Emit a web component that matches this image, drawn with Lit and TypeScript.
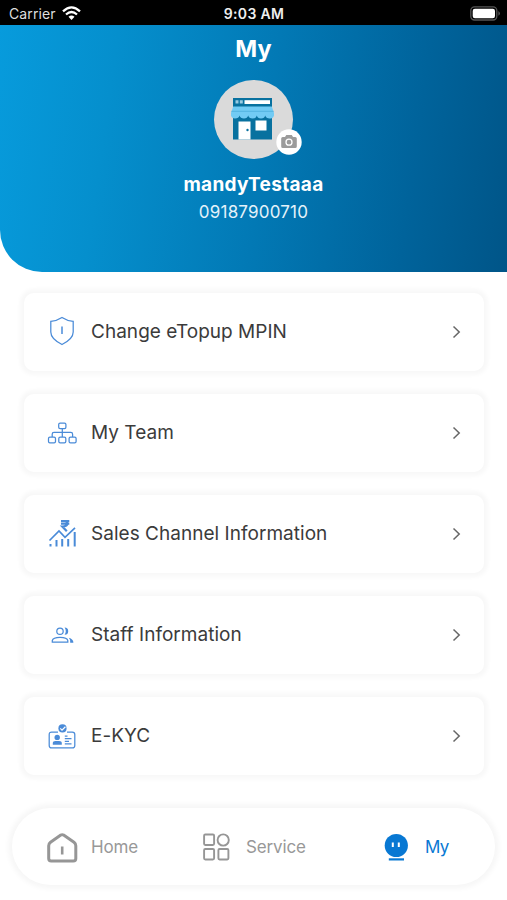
import { LitElement, html, css, svg } from "lit";
import { customElement, property } from "lit/decorators.js";

const icons: Record<string, unknown> = {
  shield: svg`<g transform="translate(0 -1)"><path d="M15 2.5C18.5 4.8 22 6 26.2 6.4V17C26.2 22.5 21 26.5 15 29.5C9 26.5 3.8 22.5 3.8 17V6.4C8 6 11.5 4.8 15 2.5Z"/><path d="M15 11.5V19" stroke-width="1.5"/></g>`,
  team: svg`<rect x="11.7" y="6" width="7.2" height="5.6" rx="1.4"/><path d="M15.3 11.6V20M5.2 20V17.2Q5.2 15.4 7 15.4H23.8Q25.6 15.4 25.6 17.2V20"/><rect x="1.5" y="20" width="7" height="5.8" rx="1.4"/><rect x="11.8" y="20" width="7" height="5.8" rx="1.4"/><rect x="22.1" y="20" width="7" height="5.8" rx="1.4"/>`,
  sales: svg`<path d="M2.5 22.5L12 13L18 19.3L28 9.8" stroke-width="1.7"/><path d="M3.5 26V28.6M9.5 22V28.6M15.2 21V28.6M21.2 21V28.6M27.7 14V28.6" stroke-width="2"/><path d="M14 3H22.3M14 5.6H22.3M15 3H17.5Q20.4 3 20.4 5.3Q20.4 8.5 15.3 8.5L19.8 13.3" stroke-width="2.2"/>`,
  staff: svg`<circle cx="13" cy="12.2" r="3.2"/><path d="M5.3 23.1V21.5Q6 18.3 13 18.3Q20.2 18.3 20.8 21.5V23.1Z"/><path d="M17.6 8.5Q21.2 8.5 21.2 12.2Q21.2 15.7 17.6 15.7Q20 12.2 17.6 8.5ZM21.8 18.8Q26.4 20.1 26.4 23.7H23.2Q23.8 21 21.8 18.8Z" fill="currentColor" stroke="none"/>`,
  kyc: svg`<g transform="translate(0 1.4)"><path d="M11 10.6H4.7Q2.2 10.6 2.2 13.1V24Q2.2 26.5 4.7 26.5H25.3Q27.8 26.5 27.8 24V13.1Q27.8 10.6 25.3 10.6H20"/><circle cx="15.5" cy="7" r="4.1" fill="currentColor" stroke="none"/><path d="M13.3 7L15 8.7L18.4 5.4" stroke="#fff" stroke-width="1.2"/><circle cx="10.2" cy="16" r="2.7" fill="currentColor" stroke="none"/><path d="M5.8 23.3V21.7Q5.8 19.5 8.5 19.5H12Q14.8 19.5 14.8 21.7V23.3Z" fill="currentColor" stroke="none"/><path d="M17.8 14.8H20.5M17.8 17.3H24.5M17.8 19.9H22M17.8 22.4H24.5" stroke-width="1.2"/></g>`,
};

@customElement("menu-card")
class MenuCard extends LitElement {
  @property() icon = "";
  @property() label = "";
  static styles = css`
    :host { display: flex; align-items: center; box-sizing: border-box; height: 78px; padding: 0 23px 0 23px; border-radius: 10px; background: #fff; box-shadow: 0 0 4px 4px #f8f8f8; }
    .icon { width: 30px; height: 32px; flex: none; color: #4a8bd8; fill: none; stroke: currentColor; stroke-width: 1.25; }
    .label { flex: 1; margin-left: 14px; font-size: 19px; line-height: 26px; letter-spacing: .03px; color: #3b3b3b; white-space: nowrap; }
    .chevron { width: 9px; height: 14px; fill: none; stroke: #666; stroke-width: 1.5; }
  `;
  render() {
    return html`<svg class="icon" viewBox="0 0 30 32">${icons[this.icon]}</svg>
      <span class="label">${this.label}</span>
      <svg class="chevron" viewBox="0 0 9 14"><path d="M1.5 1.5L7.2 7L1.5 12.5" /></svg>`;
  }
}

@customElement("app-root")
class AppRoot extends LitElement {
  static styles = css`
    :host { display: flex; flex-direction: column; width: 507px; height: 900px; overflow: hidden; background: #fff; font-family: Inter, "Liberation Sans", sans-serif; }
    svg { display: block; flex: none; }
    .status { display: grid; grid-template-columns: 1fr auto 1fr; align-items: center; box-sizing: border-box; height: 25px; flex: none; padding: 2px 6px 0 9px; background: #000; color: #fff; font-size: 14px; }
    .carrier { display: flex; align-items: center; gap: 6px; color: #dedede; letter-spacing: .1px; }
    .time { font-weight: 600; font-size: 14px; color: #eee; margin-left: -2px; letter-spacing: .32px; }
    .battery { justify-self: end; }
    .hero { display: flex; flex-direction: column; align-items: center; flex: none; height: 247px; border-bottom-left-radius: 42px; color: #fff; background: linear-gradient(98deg, #079bdc 0%, #058fcd 22%, #0279b5 52%, #00639b 80%, #005588 100%); }
    .title { margin-top: 9px; font-size: 23.5px; line-height: 30px; font-weight: 700; }
    .avatar { position: relative; width: 79px; height: 79px; margin-top: 16px; border-radius: 50%; background: #dadada; }
    .camera { position: absolute; left: 62px; top: 49px; }
    .shop { position: absolute; left: 16px; top: 17px; }
    .name { margin-top: 13px; font-size: 19px; line-height: 26px; font-weight: 700; letter-spacing: .3px; }
    .phone { margin-top: 3px; font-size: 17px; line-height: 22px; letter-spacing: .2px; color: #e4f2fa; }
    .list { display: flex; flex-direction: column; gap: 23.1px; padding: 20.5px 23px 0 24px; }
    .nav { display: flex; align-items: center; box-sizing: border-box; height: 77px; flex: none; margin: 33px 12px 0; padding: 1px 0 0 34px; border-radius: 39px; box-shadow: 0 0 5px 4px #f7f7f7; font-size: 17px; letter-spacing: -.15px; color: #989898; }
    .tab { display: flex; align-items: center; }
    .home { width: 155px; gap: 13px; }
    .service { width: 182px; gap: 15px; }
    .mine { gap: 15px; color: #0878d3; letter-spacing: -.8px; }
  `;
  render() {
    return html`
      <div class="status">
        <div class="carrier">Carrier
          <svg width="19" height="15" viewBox="0 0 19 15" fill="none" stroke="#fff" stroke-width="2.3"><path d="M1 5.3Q9.5 -2.5 18 5.3M4 8.5Q9.5 3.6 15 8.5"/><path d="M6.5 10.8Q9.5 8.2 12.5 10.8L9.5 14Z" fill="#fff" stroke="none"/></svg>
        </div>
        <div class="time">9:03 AM</div>
        <svg class="battery" width="31" height="15" viewBox="0 0 31 15"><rect x=".8" y=".8" width="26" height="13.2" rx="3.7" fill="none" stroke="#555" stroke-width="1.3"/><rect x="2.7" y="2.7" width="22.3" height="9.5" rx="2.2" fill="#fff"/><path d="M28.4 5Q31.5 7.4 28.4 9.8Z" fill="#555"/></svg>
      </div>
      <div class="hero">
        <div class="title">My</div>
        <div class="avatar">
          <svg class="shop" width="46" height="45" viewBox="0 0 46 45">
            <path d="M3 18H42V42.5H3Z" fill="#08719f"/>
            <path d="M3 1H42V10H3Z" fill="#08719f"/>
            <path d="M14.5 3.2H40V7H14.5Z" fill="#fff"/><path d="M5.5 3.3H8.5V6.5H5.5ZM9.8 3.3H12.8V6.5H9.8Z" fill="#9acbe2"/>
            <path d="M8.5 24.5H20.5V42.5H8.5ZM25.5 23.5H36.5V33.5H25.5Z" fill="#fff"/>
            <circle cx="17.5" cy="33" r="1.2" fill="#08719f"/>
            <path d="M3.2 9.5H41.8L44 16V18.5Q43 22 39.8 21.5Q36 21.5 35.2 18.5Q34.6 21.5 31 21.5Q27.5 21.5 26.8 18.5Q26.2 21.5 22.5 21.5Q19 21.5 18.2 18.5Q17.4 21.5 14 21.5Q10.2 21.5 9.6 18.5Q8.8 21.5 5 21.5Q1.8 21.5 1 18.5V16Z" fill="#72cbf4"/>
            <path d="M1.3 14.3H43.7" stroke="#4dadda" stroke-width=".8"/>
          </svg>
          <svg class="camera" width="26" height="26" viewBox="0 0 26 26"><circle cx="13" cy="13" r="12.7" fill="#fff"/><path d="M9 8L10.3 6H15.8L17 8H19.2Q20.8 8 20.8 9.6V17.5Q20.8 19 19.2 19H6.8Q5.2 19 5.2 17.5V9.6Q5.2 8 6.8 8Z" fill="#9b9b9b"/><circle cx="13" cy="13.2" r="3" fill="none" stroke="#fff" stroke-width="1.3"/></svg>
        </div>
        <div class="name">mandyTestaaa</div>
        <div class="phone">09187900710</div>
      </div>
      <div class="list">
        <menu-card icon="shield" label="Change eTopup MPIN"></menu-card>
        <menu-card icon="team" label="My Team"></menu-card>
        <menu-card icon="sales" label="Sales Channel Information"></menu-card>
        <menu-card icon="staff" label="Staff Information"></menu-card>
        <menu-card icon="kyc" label="E-KYC"></menu-card>
      </div>
      <div class="nav">
        <div class="tab home"><svg width="32" height="32" viewBox="0 0 32 32" fill="none" stroke="#969696" stroke-width="3" stroke-linejoin="round"><path d="M4.5 11.3L14.8 4.1Q16.2 3.2 17.6 4.1L28 11.3Q29.8 12.7 29.8 14.8V27.5Q29.8 30 27.3 30H5.2Q2.7 30 2.7 27.5V14.8Q2.7 12.7 4.5 11.3Z"/><path d="M16.2 15.5V23.5" stroke-width="2.6"/></svg><span>Home</span></div>
        <div class="tab service"><svg width="30" height="30" viewBox="0 0 30 30" fill="none" stroke="#969696" stroke-width="1.9"><rect x="3.1" y="2.5" width="10" height="10.5" rx="1.2"/><circle cx="22.2" cy="8" r="5.6"/><rect x="3.1" y="17" width="10" height="10.5" rx="1.2"/><rect x="17.4" y="17" width="10" height="10.5" rx="1.2"/></svg><span>Service</span></div>
        <div class="tab mine"><svg width="27" height="30" viewBox="0 0 27 30"><circle cx="13.3" cy="13.5" r="11.6" fill="#0878d3"/><path d="M9.8 10.5V15M15.8 10.5V15" stroke="#fff" stroke-width="2"/><path d="M5.8 27.4H21" stroke="#0878d3" stroke-width="2.2"/></svg><span>My</span></div>
      </div>`;
  }
}
